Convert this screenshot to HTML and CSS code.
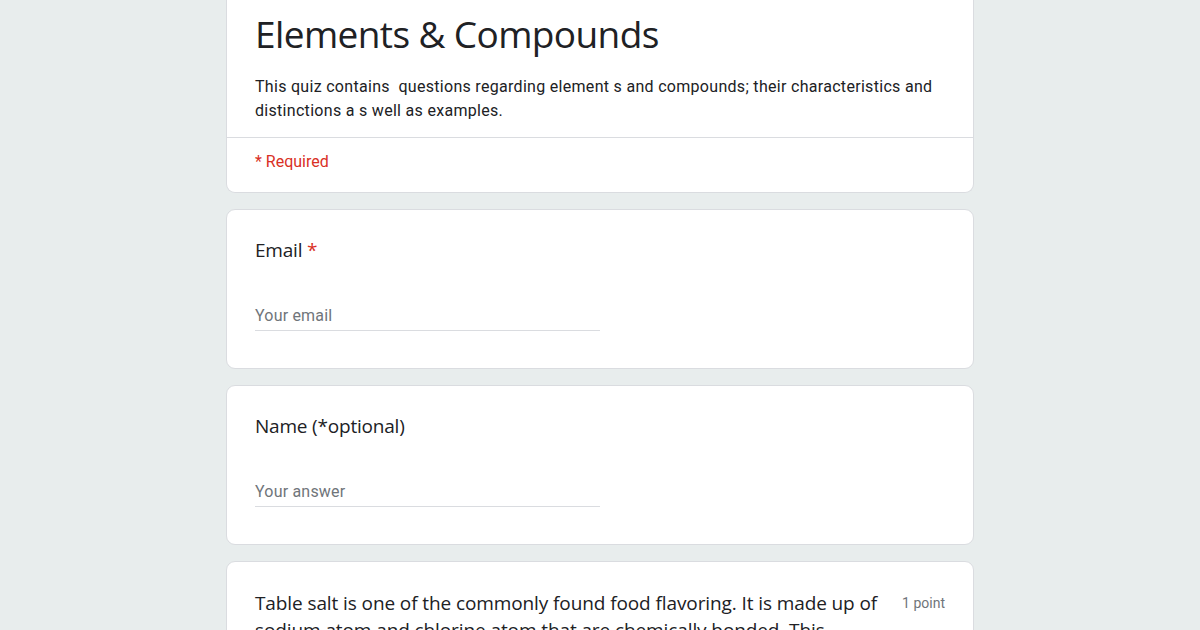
FILE: index.html
```html
<!DOCTYPE html>
<html lang="en">
<head>
<meta charset="utf-8">
<title>Elements &amp; Compounds</title>
<link rel="stylesheet" href="styles.css">
</head>
<body>
<main class="form">
  <section class="card header-card">
    <div class="header-main">
      <h1 class="title">Elements &amp; Compounds</h1>
      <p class="desc">This quiz contains&nbsp; questions regarding element s and compounds; their characteristics and distinctions a s well as examples.</p>
    </div>
    <div class="required-note">* Required</div>
  </section>

  <section class="card question">
    <div class="q-label">Email <span class="star">*</span></div>
    <div class="input"><span class="placeholder">Your email</span></div>
  </section>

  <section class="card question">
    <div class="q-label">Name (*optional)</div>
    <div class="input"><span class="placeholder">Your answer</span></div>
  </section>

  <section class="card question">
    <div class="q-row">
      <div class="q-text">Table salt is one of the commonly found food flavoring. It is made up of sodium atom and chlorine atom that are chemically bonded. This</div>
      <div class="points">1 point</div>
    </div>
  </section>
</main>
</body>
</html>
```

FILE: styles.css
```css
* { box-sizing: border-box; }
html, body { margin: 0; padding: 0; }
body {
  background: #e8eded;
  font-family: Roboto, "Liberation Sans", sans-serif;
  color: #202124;
  height: 630px;
  overflow: hidden;
}
.form {
  width: 748px;
  margin: 0 auto;
  display: flex;
  flex-direction: column;
  gap: 16px;
}
.card {
  background: #fff;
  border: 1px solid #dadce0;
  border-radius: 9px;
}
.header-card {
  border-top: none;
  border-top-left-radius: 0;
  border-top-right-radius: 0;
}
.header-main {
  padding: 10px 28px 14px;
  border-bottom: 1px solid #dadce0;
}
.title {
  margin: 0;
  font-family: "Open Sans", Roboto, sans-serif;
  font-weight: 400;
  font-size: 37px;
  line-height: 48px;
  letter-spacing: -0.6px;
  color: #202124;
}
.desc {
  margin: 17px 0 0;
  font-size: 16px;
  line-height: 24px;
  letter-spacing: 0.3px;
  color: #202124;
}
.required-note {
  padding: 12px 28px 18px;
  font-size: 16px;
  line-height: 24px;
  color: #d93025;
}
.question {
  padding: 28px 28px 37px;
}
.q-label {
  font-family: "Open Sans", Roboto, sans-serif;
  font-size: 19px;
  line-height: 24px;
  letter-spacing: -0.2px;
  color: #202124;
}
.star { color: #d93025; }
.input {
  width: 345px;
  margin-top: 42px;
  padding-bottom: 2px;
  border-bottom: 1px solid #dadce0;
}
.placeholder {
  display: block;
  font-size: 16px;
  line-height: 24px;
  letter-spacing: 0.2px;
  color: #70757a;
}
.q-row {
  display: flex;
  gap: 20px;
  align-items: flex-start;
}
.q-text {
  flex: 1;
  font-family: "Open Sans", Roboto, sans-serif;
  font-size: 19px;
  line-height: 27px;
  letter-spacing: -0.1px;
  color: #202124;
}
.points {
  font-size: 14px;
  line-height: 27px;
  color: #70757a;
  white-space: nowrap;
}
```
